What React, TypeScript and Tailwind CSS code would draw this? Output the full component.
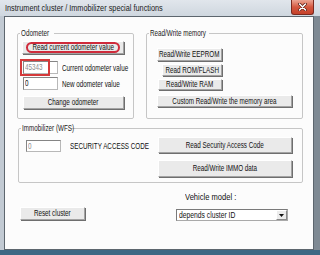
import React from "react";

const SC = "inline-block whitespace-nowrap origin-center scale-x-[0.7]";
const SL = "inline-block whitespace-nowrap origin-left scale-x-[0.7]";

function Btn({ cls, children }: { cls: string; children: React.ReactNode }) {
  return (
    <div
      className={`flex shrink-0 items-center justify-center bg-[#eaeaea] border border-t-white border-l-white border-r-[#a3a3a3] border-b-[#a3a3a3] shadow-[1px_1px_0_#6e6e6e] text-[9px] leading-none text-[#111] ${cls}`}
    >
      <span className={SC}>{children}</span>
    </div>
  );
}

function Inp({ cls, value, grey }: { cls: string; value: string; grey?: boolean }) {
  return (
    <div
      className={`flex shrink-0 items-center bg-white border border-[#b8b8b8] border-t-[#858585] border-l-[#858585] pl-[1px] text-[9px] leading-none ${grey ? "text-[#8e8e8e]" : "text-[#111]"} ${cls}`}
    >
      <span className={SL}>{value}</span>
    </div>
  );
}

function Label({ cls, children }: { cls: string; children: React.ReactNode }) {
  return (
    <div className={`shrink-0 h-[10px] text-[9px] leading-[10px] text-[#111] ${cls}`}>
      <span className={SL}>{children}</span>
    </div>
  );
}

export default function App() {
  return (
    <div className="w-[320px] h-[255px] overflow-hidden flex flex-col bg-[#c4ccd5] font-['Liberation_Sans',Arial,sans-serif]">
      {/* title bar */}
      <div className="h-[16px] shrink-0 flex items-start bg-gradient-to-b from-[#e1e6ec] to-[#cfd7df]">
        <div className="pl-[5px] h-[16px] leading-[16px] text-[9.5px] text-[#1b1b1b]">
          <span className="inline-block whitespace-nowrap origin-left scale-x-[0.77]">
            Instrument cluster / Immobilizer special functions
          </span>
        </div>
        <div className="ml-auto mr-[6px] w-[23px] h-[15px] flex items-center justify-center rounded-b-[3px] border border-t-0 border-[#7a2a1f] bg-gradient-to-b from-[#eba594] via-[#d4573f] to-[#c5412a]">
          <svg width="9" height="8" viewBox="0 0 9 8">
            <path d="M1.5 1 L7.5 7 M7.5 1 L1.5 7" stroke="#5a1a12" strokeWidth="3" strokeLinecap="round" />
            <path d="M1.5 1 L7.5 7 M7.5 1 L1.5 7" stroke="#ffffff" strokeWidth="1.6" strokeLinecap="round" />
          </svg>
        </div>
      </div>

      <div className="h-[234px] shrink-0 flex">
        <div className="w-[4px] bg-[#c2cad3]" />
        <div className="w-[310px] shrink-0 border border-[#5d666e] bg-[#fcfcfc] pl-[12px] pt-[11px] flex flex-col">
          {/* row 1 */}
          <div className="flex items-start">
            <fieldset className="w-[117px] h-[91px] min-w-0 shrink-0 border border-[#c6c6c6] rounded-[2px] pl-[2px]">
              <legend className="h-[10px] w-[34px] px-[1px] text-[9px] leading-[10px] text-[#222]">
                <span className={SL}>Odometer</span>
              </legend>
              <div className="relative ml-[2px] mt-[3px] w-[102px]">
                <Btn cls="w-[102px] h-[13px]">Read current odometer value</Btn>
                <div className="absolute left-[4px] top-[1px] w-[94px] h-[11px] rounded-full border-2 border-[#cf2b3b]" />
              </div>
              <div className="flex items-center mt-[7px] ml-[3px]">
                <div className="relative shrink-0">
                  <Inp cls="w-[35px] h-[13px]" value="45343" grey />
                  <div className="absolute -left-[3px] -top-[2px] w-[30px] h-[17px] border-2 border-[#d4393a]" />
                </div>
                <Label cls="ml-[4px]">Current odometer value</Label>
              </div>
              <div className="flex items-center mt-[3px] ml-[3px]">
                <Inp cls="w-[35px] h-[13px]" value="0" />
                <Label cls="ml-[4px]">New odometer value</Label>
              </div>
              <div className="ml-[3px] mt-[6px]">
                <Btn cls="w-[101px] h-[13px]">Change odometer</Btn>
              </div>
            </fieldset>

            <fieldset className="ml-[12px] w-[157px] h-[91px] min-w-0 shrink-0 border border-[#c6c6c6] rounded-[2px] pl-[2px]">
              <legend className="h-[10px] w-[60px] px-[1px] text-[9px] leading-[10px] text-[#222]">
                <span className={SL}>Read/Write memory</span>
              </legend>
              <div className="ml-[8px] mt-[10px]">
                <Btn cls="w-[65px] h-[13px]">Read/Write EEPROM</Btn>
              </div>
              <div className="ml-[13px] mt-[3px]">
                <Btn cls="w-[60px] h-[12px]">Read ROM/FLASH</Btn>
              </div>
              <div className="ml-[9px] mt-[3px]">
                <Btn cls="w-[64px] h-[11px]">Read/Write RAM</Btn>
              </div>
              <div className="ml-[8px] mt-[5px]">
                <Btn cls="w-[135px] h-[12px]">Custom Read/Write the memory area</Btn>
              </div>
            </fieldset>
          </div>

          {/* immobilizer */}
          <fieldset className="mt-[4px] ml-[1px] w-[285px] h-[60px] min-w-0 shrink-0 border border-[#c6c6c6] rounded-[2px] pl-[2px]">
            <legend className="h-[10px] w-[49px] px-[1px] text-[9px] leading-[10px] text-[#222]">
              <span className={SL}>Immobilizer (WFS)</span>
            </legend>
            <div className="flex items-start">
              <div className="w-[137px] shrink-0 flex items-start">
                <Inp cls="ml-[5px] mt-[7px] w-[35px] h-[12px]" value="0" grey />
                <Label cls="ml-[9px] mt-[8px]">SECURITY ACCESS CODE</Label>
              </div>
              <div className="flex flex-col mt-[4px]">
                <Btn cls="w-[134px] h-[16px]">Read Security Access Code</Btn>
                <Btn cls="mt-[7px] w-[134px] h-[17px]">Read/Write IMMO data</Btn>
              </div>
            </div>
          </fieldset>

          {/* bottom row */}
          <div className="mt-[9px] flex items-start">
            <Btn cls="ml-[3px] mt-[15px] w-[65px] h-[13px]">Reset cluster</Btn>
            <div className="ml-[91px] flex flex-col">
              <div className="ml-[9px] shrink-0 h-[10px] text-[9px] leading-[10px] text-[#111]">
                <span className="inline-block whitespace-nowrap origin-left scale-x-[0.84]">Vehicle model :</span>
              </div>
              <div className="mt-[7px] w-[112px] h-[12px] flex items-center bg-white border border-[#a9a9a9] border-t-[#7a7a7a] border-l-[#7a7a7a]">
                <div className="flex-1 pl-[2px] text-[9px] leading-none text-[#111]">
                  <span className="inline-block whitespace-nowrap origin-left scale-x-[0.75]">depends cluster ID</span>
                </div>
                <div className="w-[11px] h-[10px] flex items-center justify-center bg-[#ececec] border border-t-white border-l-white border-r-[#8a8a8a] border-b-[#8a8a8a]">
                  <svg width="5" height="3" viewBox="0 0 5 3">
                    <path d="M0 0 L5 0 L2.5 3 Z" fill="#111" />
                  </svg>
                </div>
              </div>
            </div>
          </div>
        </div>
        <div className="flex-1 bg-[#7f8a94]" />
      </div>
      <div className="flex-1 bg-[#3d6884]" />
    </div>
  );
}
